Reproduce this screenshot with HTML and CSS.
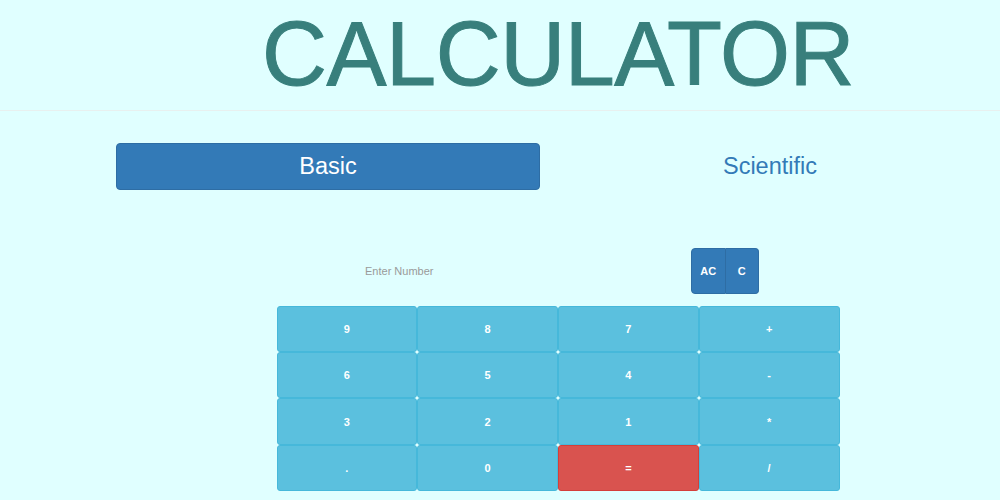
FILE: index.html
```html
<!DOCTYPE html>
<html>
<head>
<meta charset="utf-8">
<link rel="stylesheet" href="styles.css">
</head>
<body>
<header class="header">
  <div class="container">
    <h1 class="title">CALCULATOR</h1>
  </div>
</header>
<main class="container">
  <nav class="tabs">
    <a class="tab tab-active">Basic</a>
    <a class="tab">Scientific</a>
  </nav>
  <section class="calc">
    <div class="display">
      <input class="entry" type="text" placeholder="Enter Number">
      <div class="btn-group">
        <button class="clr">AC</button>
        <button class="clr">C</button>
      </div>
    </div>
    <div class="keys">
      <button class="key">9</button>
      <button class="key">8</button>
      <button class="key">7</button>
      <button class="key">+</button>
      <button class="key">6</button>
      <button class="key">5</button>
      <button class="key">4</button>
      <button class="key">-</button>
      <button class="key">3</button>
      <button class="key">2</button>
      <button class="key">1</button>
      <button class="key">*</button>
      <button class="key">.</button>
      <button class="key">0</button>
      <button class="key key-eq">=</button>
      <button class="key">/</button>
    </div>
  </section>
</main>
</body>
</html>
```

FILE: styles.css
```css
* { box-sizing: border-box; }

html, body {
  margin: 0;
  background: #e0ffff;
  font-family: "Liberation Sans", Arial, Helvetica, sans-serif;
}

.container {
  margin-left: 116px;
  width: 884px;
}

.header {
  height: 111px;
  border-bottom: 1px solid #e8f0ef;
}

.title {
  margin: 0;
  padding-top: 9px;
  font-size: 90px;
  line-height: 90px;
  font-weight: normal;
  letter-spacing: -0.5px;
  color: #387f7c;
  text-align: center;
  -webkit-text-stroke: 1px #387f7c;
}

.tabs {
  display: flex;
  margin-top: 32px;
  height: 47px;
}

.tab {
  display: flex;
  align-items: center;
  justify-content: center;
  font-size: 23.5px;
  color: #337ab7;
  flex: 1;
}

.tab-active {
  flex: 0 0 424px;
  background: #337ab7;
  border: 1px solid #2e6da4;
  border-radius: 4px;
  color: #fff;
}

.calc {
  margin-top: 58px;
  display: flex;
  flex-direction: column;
  align-items: center;
}

.display {
  display: flex;
  width: 406px;
  height: 46px;
  margin-right: 4px;
}

.entry {
  flex: 1;
  border: none;
  background: transparent;
  padding: 0 12px;
  font-family: inherit;
  font-size: 11px;
  color: #555;
  outline: none;
}

.entry::placeholder { color: #9a9a9a; }

.btn-group {
  display: flex;
  width: 68px;
  height: 46px;
}

.clr {
  flex: 1;
  background: #337ab7;
  border: 1px solid #2e6da4;
  color: #fff;
  font-family: inherit;
  font-size: 11px;
  font-weight: bold;
  padding: 0;
}

.clr:first-child {
  border-radius: 4px 0 0 4px;
}

.clr:last-child {
  border-left: none;
  border-radius: 0 4px 4px 0;
}

.keys {
  margin-top: 12px;
  width: 563px;
  display: grid;
  grid-template-columns: repeat(4, 1fr);
  grid-template-rows: 46px 46px 47px 46px;
}

.key {
  background: #5bc0de;
  border: 1px solid #46b8da;
  border-radius: 3px;
  color: #fff;
  font-family: inherit;
  font-size: 11px;
  font-weight: bold;
  padding: 0;
}

.key-eq {
  background: #d9534f;
  border-color: #d43f3a;
}
```
